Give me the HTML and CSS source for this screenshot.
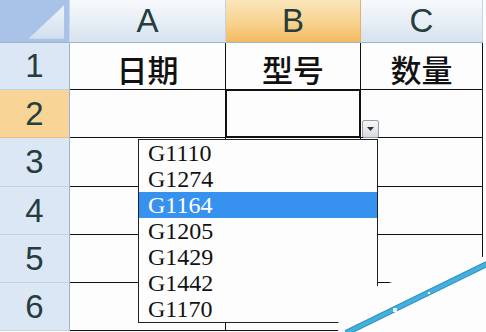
FILE: index.html
```html
<!DOCTYPE html>
<html>
<head>
	<title>数据有效性</title>
	<link rel="stylesheet" href="styles.css">
</head>
<body>
	<div class="sheet">
		<div class="grid">
			<div class="corner">
				<svg width="70" height="43" viewBox="0 0 70 43">
					<defs>
						<linearGradient id="tri" x1="0" y1="0" x2="0" y2="1">
							<stop offset="0" stop-color="#eef3f9"/>
							<stop offset="1" stop-color="#d3dfee"/>
						</linearGradient>
					</defs>
					<polygon points="29,39 65,39 65,5" fill="url(#tri)"/>
				</svg>
			</div>
			<div class="col">A</div>
			<div class="col sel">B</div>
			<div class="col">C</div>

			<div class="row">1</div>
			<div class="cell title">日期</div>
			<div class="cell title">型号</div>
			<div class="cell title">数量</div>

			<div class="row sel">2</div>
			<div class="cell"></div>
			<div class="cell active"></div>
			<div class="cell"></div>

			<div class="row">3</div>
			<div class="cell"></div>
			<div class="cell"></div>
			<div class="cell"></div>

			<div class="row">4</div>
			<div class="cell"></div>
			<div class="cell"></div>
			<div class="cell"></div>

			<div class="row">5</div>
			<div class="cell"></div>
			<div class="cell"></div>
			<div class="cell"></div>

			<div class="row">6</div>
			<div class="cell"></div>
			<div class="cell"></div>
			<div class="cell"></div>
		</div>

		<div class="arrow-btn">
			<svg width="7" height="4" viewBox="0 0 7 4"><polygon points="0,0 7,0 3.5,4" fill="#333"/></svg>
		</div>

		<ul class="list">
			<li>G1110</li>
			<li>G1274</li>
			<li class="hover">G1164</li>
			<li>G1205</li>
			<li>G1429</li>
			<li>G1442</li>
			<li>G1170</li>
		</ul>

		<svg class="mark" width="150" height="80" viewBox="336 252 150 80">
			<polygon points="338,332 340,292 378,286 486,256 486,332" fill="#fdfdfd"/>
			<line x1="346" y1="333" x2="487" y2="264" stroke="#2f8fbf" stroke-width="6"/>
			<line x1="346" y1="333" x2="487" y2="264" stroke="#43b0de" stroke-width="4"/>
			<rect x="393" y="308" width="4" height="4" fill="#e9f6fb"/>
			<rect x="428" y="292" width="2" height="2" fill="#e9f6fb"/>
		</svg>
	</div>
</body>
</html>
```

FILE: styles.css
```css
body{
	margin:0;
	background:#fdfdfd;
	overflow:hidden;
}
.sheet{
	position:relative;
	width:486px;
	height:332px;
	overflow:hidden;
}
.grid{
	display:grid;
	grid-template-columns:70px 156px 135px 122px;
	grid-template-rows:43px 47px 48px 49px 48px 48px 48px;
}
.grid>div{
	box-sizing:border-box;
	display:flex;
	align-items:center;
	justify-content:center;
}
.corner{
	background:#a8c3e7;
	border-right:1px solid #c9d8ea;
	border-bottom:1px solid #9db4cf;
}
.corner svg{
	display:block;
}
.col,.row{
	font-family:"Liberation Sans",Arial,sans-serif;
	font-size:33px;
	color:#263d3d;
}
.col{
	background:linear-gradient(#f7f9fc,#e6edf5 55%,#d7e2ee);
	border-right:1px solid #c5d4e5;
	border-bottom:1px solid #9db4cf;
}
.col.sel{
	background:linear-gradient(#fbe6bd,#f8d28d 55%,#f2ba60);
	border-right-color:#e0b36a;
}
.row{
	background:#dce7f5;
	border-right:1px solid #9db4cf;
	border-bottom:1px solid #c3d2e4;
}
.row.sel{
	background:#f8d596;
	border-bottom-color:#e7c17d;
}
.cell{
	background:#fdfdfd;
	border-right:1px solid #111;
	border-bottom:1px solid #111;
}
.title{
	font-family:"Noto Sans CJK SC",sans-serif;
	font-size:31px;
	font-weight:500;
	color:#111;
	padding-top:4px;
}
.active{
	border:2px solid #111;
	margin:-1px 0 0 -1px;
}
.arrow-btn{
	position:absolute;
	left:362px;
	top:120px;
	width:15px;
	height:16px;
	border:1px solid #9a9ea6;
	border-radius:2px;
	background:linear-gradient(#f6f7f9,#d7dbe1);
	display:flex;
	align-items:center;
	justify-content:center;
}
.arrow-btn svg{
	display:block;
}
.list{
	position:absolute;
	left:138px;
	top:139px;
	width:238px;
	margin:0;
	padding:0;
	list-style:none;
	background:#fdfdfd;
	border:1px solid #222;
	font-family:"Liberation Serif","Times New Roman",serif;
	font-size:24px;
	color:#111;
}
.list li{
	height:26px;
	line-height:27px;
	padding-left:9px;
}
.list li.hover{
	background:#3792ef;
	color:#fff;
}
.mark{
	position:absolute;
	right:0;
	bottom:0;
}
```
